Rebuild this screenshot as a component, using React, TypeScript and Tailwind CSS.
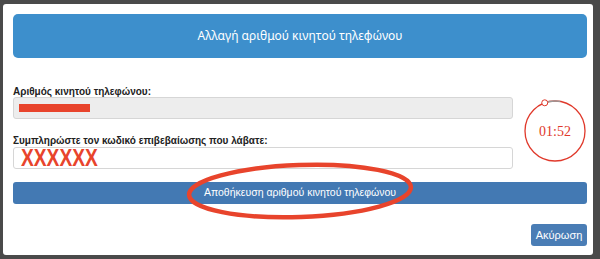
import React from 'react';

const Timer: React.FC<{ label: string }> = ({ label }) => {
    // remaining arc in red, elapsed part in grey, knob where they meet
    const r = 30;
    const cx = 32;
    const cy = 32;
    const start = -110 * (Math.PI / 180);
    const end = -80 * (Math.PI / 180);
    const kx = cx + r * Math.cos(start);
    const ky = cy + r * Math.sin(start);
    return (
        <div className="relative w-[64px] h-[64px] mt-[13px]">
            <svg width="64" height="64" viewBox="0 0 64 64" className="absolute inset-0">
                <circle cx={cx} cy={cy} r={r} fill="none" stroke="#e0392b" strokeWidth="1.3" />
                <path d={`M ${kx} ${ky} A ${r} ${r} 0 0 1 ${cx + r * Math.cos(end)} ${cy + r * Math.sin(end)}`} fill="none" stroke="#9a9a9a" strokeWidth="1.3" />
                <circle cx={kx} cy={ky} r="3" fill="white" stroke="#e0392b" strokeWidth="1" />
            </svg>
            <div className="absolute inset-0 flex items-center justify-center text-[14px] text-[#e0392b] [font-family:'Liberation_Serif',serif]">
                {label}
            </div>
        </div>
    );
};

const App: React.FC = () => {
    return (
        <div className="w-[600px] h-[259px] bg-[#4a4a4a] pt-[4px] pl-[3px] [font-family:'Liberation_Sans',sans-serif]">
            <div className="relative w-[590px] h-[251px] bg-white rounded-[3px] pl-[10px] pr-[6px] pt-[10px]">
                <div className="h-[44px] bg-[#3d8fcc] rounded-[5px] flex items-center justify-center text-white text-[12px] [font-family:'Noto_Sans',sans-serif]">
                    Αλλαγή αριθμού κινητού τηλεφώνου
                </div>

                <div className="flex items-start gap-[10px] mt-[28px]">
                    <div className="w-[500px] shrink-0 flex flex-col">
                        <label className="text-[10px] font-bold text-[#222] leading-[11px]">Αριθμός κινητού τηλεφώνου:</label>
                        <div className="h-[22px] bg-[#ededed] border border-[#d6d6d6] rounded-[3px] flex items-center px-[5px]">
                            <div className="w-[71px] h-[8px] bg-[#e8442c]" />
                        </div>
                        <label className="mt-[16px] text-[10px] font-bold text-[#222] leading-[11px]">Συμπληρώστε τον κωδικό επιβεβαίωσης που λάβατε:</label>
                        <div className="mt-[1px] h-[22px] bg-white border border-[#d6d6d6] rounded-[3px] flex items-center pl-[7px]">
                            <span className="inline-block origin-left scale-x-[0.8] text-[24px] leading-[20px] font-bold text-[#e8442c]">XXXXXX</span>
                        </div>
                    </div>
                    <Timer label="01:52" />
                </div>

                <button className="mt-[13px] w-full h-[22px] bg-[#4379b3] rounded-[3px] text-white text-[10.5px] flex items-center justify-center">
                    Αποθήκευση αριθμού κινητού τηλεφώνου
                </button>

                <div className="flex justify-end mt-[20px]">
                    <button className="w-[56px] h-[22px] bg-[#4a7db5] rounded-[3px] text-white text-[11px] flex items-center justify-center">
                        Ακύρωση
                    </button>
                </div>

                {/* red annotation ellipse drawn over the save button */}
                <svg className="absolute left-[181px] top-[157px]" width="232" height="60" viewBox="0 0 232 60">
                    <ellipse cx="116" cy="30" rx="111" ry="26" fill="none" stroke="#e8442c" strokeWidth="4.5" transform="rotate(-2 116 30)" />
                </svg>
            </div>
        </div>
    );
};

export default App;
